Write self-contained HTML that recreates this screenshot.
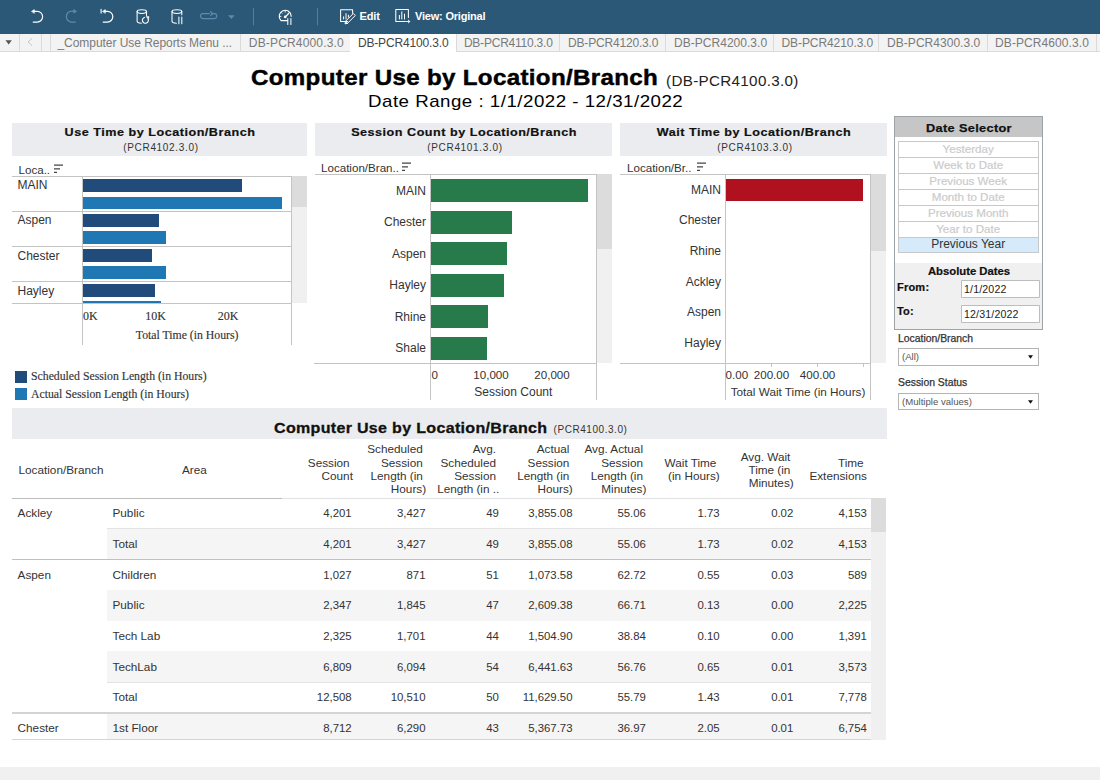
<!DOCTYPE html>
<html><head><meta charset="utf-8">
<style>
*{margin:0;padding:0;box-sizing:border-box}
html,body{width:1100px;height:780px;overflow:hidden;background:#fff;font-family:"Liberation Sans",sans-serif;color:#333;position:relative}
.a{position:absolute;white-space:nowrap}
.r{position:absolute}
</style></head><body>
<div class="r" style="left:0px;top:0px;width:1100px;height:34px;background:#2b5876;"></div>
<svg class="r" style="left:0;top:0" width="520" height="34" viewBox="0 0 520 34" fill="none" stroke-linecap="round" stroke-linejoin="round">
 <path d="M34 11.3 H37.2 A5.4 5.4 0 0 1 37.2 22.1 H33.2" stroke="#ffffff" stroke-width="1.2"/>
 <path d="M31.7 11.3 L34.3 9.6 L34.3 13 Z" fill="#ffffff" stroke="#ffffff" stroke-width="0.6"/>
 <path d="M74.5 11.2 H71.8 A5.45 5.45 0 0 0 71.8 22.1 H75.3" stroke="#5a8bb0" stroke-width="1.2"/>
 <path d="M76.3 11.2 L73.8 9.6 L73.8 12.8 Z" fill="#5a8bb0" stroke="#5a8bb0" stroke-width="0.8"/>
 <path d="M101.1 9.4 V13.1" stroke="#ffffff" stroke-width="1.1"/>
 <path d="M105 11.3 H107.4 A5.4 5.4 0 0 1 107.4 22.1 H103.2" stroke="#ffffff" stroke-width="1.2"/>
 <path d="M102.7 11.3 L105.3 9.6 L105.3 13 Z" fill="#ffffff" stroke="#ffffff" stroke-width="0.6"/>
 <ellipse cx="141.8" cy="11.6" rx="4.7" ry="1.9" stroke="#ffffff" stroke-width="1.05"/>
 <path d="M137.1 11.6 V21.3 A4.7 1.9 0 0 0 141.3 23.2" stroke="#ffffff" stroke-width="1.05"/>
 <path d="M146.5 11.6 V15.6" stroke="#ffffff" stroke-width="1.05"/>
 <path d="M148.2 19.2 A3 3 0 1 1 144.4 17.4" stroke="#ffffff" stroke-width="1.1"/>
 <path d="M146.4 16.6 L149 16.6 L148.6 19.4 Z" fill="#ffffff" stroke="#ffffff" stroke-width="0.5"/>
 <ellipse cx="176.9" cy="11.6" rx="4.9" ry="1.9" stroke="#ffffff" stroke-width="1.05"/>
 <path d="M172 11.6 V21.3 A4.9 1.9 0 0 0 176.4 23.2" stroke="#ffffff" stroke-width="1.05"/>
 <path d="M181.8 11.6 V14.8" stroke="#ffffff" stroke-width="1.05"/>
 <path d="M178.9 17 V23.8 M181.8 17 V23.8" stroke="#ffffff" stroke-width="1.05"/>
 <path d="M211.3 13.6 H214.3 A2.5 2.5 0 0 1 214.3 18.6 H203 A2.5 2.5 0 0 1 203 13.6 H209.5" stroke="#5a8bb0" stroke-width="1.1"/>
 <path d="M210.6 11.5 L212.8 13.6 L210.6 15.7" stroke="#5a8bb0" stroke-width="1.1"/>
 <path d="M228 15.3 H234.6 L231.3 19 Z" fill="#5a8bb0"/>
 <path d="M253.5 8.2 V25" stroke="#4d7fa3" stroke-width="1"/>
 <path d="M317.5 8.2 V25" stroke="#4d7fa3" stroke-width="1"/>
 <path d="M287.2 20.6 H281 A6 6 0 1 1 291.2 16.3" stroke="#ffffff" stroke-width="1.15"/>
 <path d="M285.4 16.8 L288.6 13.6" stroke="#ffffff" stroke-width="1.3"/>
 <circle cx="285.2" cy="16.9" r="1.3" fill="#ffffff"/>
 <path d="M285.2 10.8 V12.2 M279.6 16.4 H281 M281.2 12.4 L282.1 13.3 M289.2 12.4 L288.4 13.2" stroke="#ffffff" stroke-width="0.9"/>
 <path d="M287.8 18.6 V24.4 M290.9 18.6 V24.4" stroke="#ffffff" stroke-width="1.05"/>
 <path d="M347.5 21.5 H340.6 V9.8 H352.6 V13.2" stroke="#ffffff" stroke-width="1.05"/>
 <path d="M343.6 16.8 V19 M346 13.6 V19 M348.4 15.2 V17.2" stroke="#ffffff" stroke-width="1"/>
 <path d="M347.6 23.2 L355.3 15.5 L353.3 13.5 L345.6 21.2 Z" stroke="#ffffff" stroke-width="1"/>
 <path d="M345.6 21.2 L345 23.9 L347.6 23.2" stroke="#ffffff" stroke-width="1"/>
 <path d="M405.4 21.4 H395.8 V9.5 H408.4 V17.4" stroke="#ffffff" stroke-width="1.05"/>
 <path d="M399.4 15.4 V19 M401.8 11.8 V19 M404.5 14.2 V19" stroke="#ffffff" stroke-width="1"/>
 <path d="M406.4 21.5 H409.8 M408.3 20.1 L409.8 21.5 L408.3 22.9" stroke="#ffffff" stroke-width="0.9"/>
</svg>
<div class="a" style="top:6.30px;font-size:11px;line-height:20px;color:#fff;font-weight:bold;font-family:'Liberation Sans',sans-serif;letter-spacing:-0.1px;left:359.40px;">Edit</div>
<div class="a" style="top:6.30px;font-size:11px;line-height:20px;color:#fff;font-weight:bold;font-family:'Liberation Sans',sans-serif;letter-spacing:-0.2px;left:415.00px;">View: Original</div>
<div class="r" style="left:0px;top:34px;width:1100px;height:18px;background:#f3f3f3;"></div>
<div class="r" style="left:0px;top:51px;width:1100px;height:1px;background:#dadada;"></div>
<div class="r" style="left:19px;top:34px;width:1px;height:18px;background:#dadada;"></div>
<div class="r" style="left:41px;top:34px;width:1px;height:18px;background:#dadada;"></div>
<div class="r" style="left:50px;top:34px;width:1px;height:18px;background:#dadada;"></div>
<div class="r" style="left:240px;top:34px;width:1px;height:18px;background:#dadada;"></div>
<div class="r" style="left:350px;top:34px;width:1px;height:18px;background:#dadada;"></div>
<div class="r" style="left:456px;top:34px;width:1px;height:18px;background:#dadada;"></div>
<div class="r" style="left:559px;top:34px;width:1px;height:18px;background:#dadada;"></div>
<div class="r" style="left:665px;top:34px;width:1px;height:18px;background:#dadada;"></div>
<div class="r" style="left:773px;top:34px;width:1px;height:18px;background:#dadada;"></div>
<div class="r" style="left:878px;top:34px;width:1px;height:18px;background:#dadada;"></div>
<div class="r" style="left:987px;top:34px;width:1px;height:18px;background:#dadada;"></div>
<div class="r" style="left:1096px;top:34px;width:1px;height:18px;background:#dadada;"></div>
<div class="r" style="left:350px;top:34px;width:106px;height:18px;background:#ffffff;"></div>
<svg class="r" style="left:0;top:34px" width="60" height="18"><path d="M5.5 6.2 H11.8 L8.65 10.4 Z" fill="#555"/><path d="M32 4.4 L28 8 L32 11.6" stroke="#c4c4c4" stroke-width="1" fill="none"/></svg>
<div class="a" style="top:33.00px;font-size:12px;line-height:20px;color:#7a7a7a;font-weight:normal;font-family:'Liberation Sans',sans-serif;letter-spacing:-0.05px;left:57.50px;">_Computer Use Reports Menu ...</div>
<div class="a" style="top:33.00px;font-size:12px;line-height:20px;color:#7a7a7a;font-weight:normal;font-family:'Liberation Sans',sans-serif;letter-spacing:0.17px;left:248.80px;">DB-PCR4000.3.0</div>
<div class="a" style="top:33.00px;font-size:12px;line-height:20px;color:#444;font-weight:normal;font-family:'Liberation Sans',sans-serif;letter-spacing:-0.15px;left:357.90px;">DB-PCR4100.3.0</div>
<div class="a" style="top:33.00px;font-size:12px;line-height:20px;color:#7a7a7a;font-weight:normal;font-family:'Liberation Sans',sans-serif;letter-spacing:-0.22px;left:463.90px;">DB-PCR4110.3.0</div>
<div class="a" style="top:33.00px;font-size:12px;line-height:20px;color:#7a7a7a;font-weight:normal;font-family:'Liberation Sans',sans-serif;letter-spacing:-0.18px;left:568.00px;">DB-PCR4120.3.0</div>
<div class="a" style="top:33.00px;font-size:12px;line-height:20px;color:#7a7a7a;font-weight:normal;font-family:'Liberation Sans',sans-serif;letter-spacing:0.02px;left:674.10px;">DB-PCR4200.3.0</div>
<div class="a" style="top:33.00px;font-size:12px;line-height:20px;color:#7a7a7a;font-weight:normal;font-family:'Liberation Sans',sans-serif;letter-spacing:-0.08px;left:781.50px;">DB-PCR4210.3.0</div>
<div class="a" style="top:33.00px;font-size:12px;line-height:20px;color:#7a7a7a;font-weight:normal;font-family:'Liberation Sans',sans-serif;letter-spacing:0.03px;left:887.10px;">DB-PCR4300.3.0</div>
<div class="a" style="top:33.00px;font-size:12px;line-height:20px;color:#7a7a7a;font-weight:normal;font-family:'Liberation Sans',sans-serif;letter-spacing:0.08px;left:995.10px;">DB-PCR4600.3.0</div>
<div class="a" style="top:68.40px;font-size:22px;line-height:20px;color:#000;font-weight:bold;font-family:'Liberation Sans',sans-serif;letter-spacing:0.3px;left:251.00px;transform:scaleX(1.097);transform-origin:left top;-webkit-text-stroke:0.45px #000;">Computer Use by Location/Branch</div>
<div class="a" style="top:70.60px;font-size:14px;line-height:20px;color:#222;font-weight:normal;font-family:'Liberation Sans',sans-serif;letter-spacing:0.3px;left:665.60px;transform:scaleX(1.085);transform-origin:left top;">(DB-PCR4100.3.0)</div>
<div class="a" style="top:92.40px;font-size:17px;line-height:20px;color:#000;font-weight:normal;font-family:'Liberation Sans',sans-serif;letter-spacing:0.45px;left:368.00px;transform:scaleX(1.1);transform-origin:left top;">Date Range : 1/1/2022 - 12/31/2022</div>
<div class="r" style="left:12px;top:123px;width:295px;height:33px;background:#ebecef;"></div>
<div class="a" style="top:121.70px;font-size:11px;line-height:20px;color:#111;font-weight:bold;font-family:'Liberation Sans',sans-serif;letter-spacing:0.45px;left:-339.80px;width:1000px;text-align:center;transform:scaleX(1.145);transform-origin:center top;-webkit-text-stroke:0.2px #111;">Use Time by Location/Branch</div>
<div class="a" style="top:137.50px;font-size:10px;line-height:20px;color:#333;font-weight:normal;font-family:'Liberation Sans',sans-serif;letter-spacing:0.68px;left:-339.00px;width:1000px;text-align:center;">(PCR4102.3.0)</div>
<div class="a" style="top:159.50px;font-size:11.6px;line-height:20px;color:#333;font-weight:normal;font-family:'Liberation Sans',sans-serif;left:18.50px;">Loca..</div>
<svg class="r" style="left:54.3px;top:163.8px" width="10" height="10"><path d="M0 1.2 H9 M0 4.8 H6 M0 8.4 H3" stroke="#444" stroke-width="1.2"/></svg>
<div class="r" style="left:292px;top:176px;width:15px;height:127px;background:#f0f0f0;"></div>
<div class="r" style="left:292px;top:176px;width:15px;height:31px;background:#dcdcdc;"></div>
<div class="r" style="left:12px;top:176px;width:279px;height:1px;background:#c4c4c4;"></div>
<div class="r" style="left:12px;top:211px;width:279px;height:1px;background:#c4c4c4;"></div>
<div class="r" style="left:12px;top:246px;width:279px;height:1px;background:#c4c4c4;"></div>
<div class="r" style="left:12px;top:281px;width:279px;height:1px;background:#c4c4c4;"></div>
<div class="r" style="left:12px;top:303px;width:279px;height:1px;background:#c4c4c4;"></div>
<div class="r" style="left:82px;top:176px;width:1px;height:169px;background:#c4c4c4;"></div>
<div class="r" style="left:291px;top:176px;width:1px;height:169px;background:#c4c4c4;"></div>
<div class="r" style="left:83px;top:179px;width:159.0px;height:12.5px;background:#214b7b"></div>
<div class="r" style="left:83px;top:196.5px;width:198.5px;height:12.5px;background:#1f77b4"></div>
<div class="r" style="left:83px;top:214px;width:75.6px;height:12.5px;background:#214b7b"></div>
<div class="r" style="left:83px;top:231px;width:83.4px;height:13px;background:#1f77b4"></div>
<div class="r" style="left:83px;top:249px;width:69.0px;height:12.5px;background:#214b7b"></div>
<div class="r" style="left:83px;top:266px;width:83.4px;height:13px;background:#1f77b4"></div>
<div class="r" style="left:83px;top:284px;width:72.0px;height:12.5px;background:#214b7b"></div>
<div class="r" style="left:83px;top:301px;width:77.8px;height:2px;background:#1f77b4"></div>
<div class="a" style="top:175.10px;font-size:12px;line-height:20px;color:#333;font-weight:normal;font-family:'Liberation Sans',sans-serif;left:17.50px;">MAIN</div>
<div class="a" style="top:210.30px;font-size:12px;line-height:20px;color:#333;font-weight:normal;font-family:'Liberation Sans',sans-serif;left:17.50px;">Aspen</div>
<div class="a" style="top:245.60px;font-size:12px;line-height:20px;color:#333;font-weight:normal;font-family:'Liberation Sans',sans-serif;left:17.50px;">Chester</div>
<div class="a" style="top:280.60px;font-size:12px;line-height:20px;color:#333;font-weight:normal;font-family:'Liberation Sans',sans-serif;left:17.50px;">Hayley</div>
<div class="a" style="top:306.20px;font-size:12px;line-height:20px;color:#333;font-weight:normal;font-family:'Liberation Serif',serif;left:83.00px;-webkit-text-stroke:0.15px #333;">0K</div>
<div class="a" style="top:306.20px;font-size:12px;line-height:20px;color:#333;font-weight:normal;font-family:'Liberation Serif',serif;left:-344.50px;width:1000px;text-align:center;-webkit-text-stroke:0.15px #333;">10K</div>
<div class="a" style="top:306.20px;font-size:12px;line-height:20px;color:#333;font-weight:normal;font-family:'Liberation Serif',serif;left:-272.00px;width:1000px;text-align:center;-webkit-text-stroke:0.15px #333;">20K</div>
<div class="a" style="top:326.10px;font-size:11.75px;line-height:20px;color:#333;font-weight:normal;font-family:'Liberation Serif',serif;left:-312.90px;width:1000px;text-align:center;-webkit-text-stroke:0.15px #333;">Total Time (in Hours)</div>
<div class="r" style="left:15px;top:371px;width:12px;height:12px;background:#214b7b;"></div>
<div class="r" style="left:15px;top:388px;width:12px;height:12px;background:#1f77b4;"></div>
<div class="a" style="top:367.40px;font-size:11.75px;line-height:20px;color:#333;font-weight:normal;font-family:'Liberation Serif',serif;left:31.00px;-webkit-text-stroke:0.15px #333;">Scheduled Session Length (in Hours)</div>
<div class="a" style="top:385.00px;font-size:11.75px;line-height:20px;color:#333;font-weight:normal;font-family:'Liberation Serif',serif;left:31.00px;-webkit-text-stroke:0.15px #333;">Actual Session Length (in Hours)</div>
<div class="r" style="left:315px;top:123px;width:297px;height:33px;background:#ebecef;"></div>
<div class="a" style="top:121.70px;font-size:11px;line-height:20px;color:#111;font-weight:bold;font-family:'Liberation Sans',sans-serif;letter-spacing:0.45px;left:-35.80px;width:1000px;text-align:center;transform:scaleX(1.145);transform-origin:center top;-webkit-text-stroke:0.2px #111;">Session Count by Location/Branch</div>
<div class="a" style="top:137.50px;font-size:10px;line-height:20px;color:#333;font-weight:normal;font-family:'Liberation Sans',sans-serif;letter-spacing:0.68px;left:-35.00px;width:1000px;text-align:center;">(PCR4101.3.0)</div>
<div class="a" style="top:157.70px;font-size:11.6px;line-height:20px;color:#333;font-weight:normal;font-family:'Liberation Sans',sans-serif;left:321.00px;">Location/Bran..</div>
<svg class="r" style="left:402px;top:162px" width="10" height="10"><path d="M0 1.2 H9 M0 4.8 H6 M0 8.4 H3" stroke="#444" stroke-width="1.2"/></svg>
<div class="r" style="left:597px;top:174px;width:15px;height:189px;background:#f0f0f0;"></div>
<div class="r" style="left:597px;top:174px;width:15px;height:75px;background:#dcdcdc;"></div>
<div class="r" style="left:315px;top:174px;width:282px;height:1px;background:#c4c4c4;"></div>
<div class="r" style="left:314px;top:363px;width:283px;height:1px;background:#c4c4c4;"></div>
<div class="r" style="left:430px;top:174px;width:1px;height:226px;background:#c4c4c4;"></div>
<div class="r" style="left:596px;top:174px;width:1px;height:226px;background:#c4c4c4;"></div>
<div class="r" style="left:431px;top:179px;width:157.0px;height:23px;background:#277b4b"></div>
<div class="r" style="left:431px;top:210.6px;width:80.8px;height:23.0px;background:#277b4b"></div>
<div class="r" style="left:431px;top:242.1px;width:75.6px;height:23.00000000000003px;background:#277b4b"></div>
<div class="r" style="left:431px;top:273.6px;width:72.7px;height:23.0px;background:#277b4b"></div>
<div class="r" style="left:431px;top:305.1px;width:56.5px;height:23.0px;background:#277b4b"></div>
<div class="r" style="left:431px;top:336.6px;width:55.6px;height:23.0px;background:#277b4b"></div>
<div class="a" style="top:180.70px;font-size:12px;line-height:20px;color:#333;font-weight:normal;font-family:'Liberation Sans',sans-serif;left:-174.00px;width:600px;text-align:right;">MAIN</div>
<div class="a" style="top:212.20px;font-size:12px;line-height:20px;color:#333;font-weight:normal;font-family:'Liberation Sans',sans-serif;left:-174.00px;width:600px;text-align:right;">Chester</div>
<div class="a" style="top:243.60px;font-size:12px;line-height:20px;color:#333;font-weight:normal;font-family:'Liberation Sans',sans-serif;left:-174.00px;width:600px;text-align:right;">Aspen</div>
<div class="a" style="top:275.10px;font-size:12px;line-height:20px;color:#333;font-weight:normal;font-family:'Liberation Sans',sans-serif;left:-174.00px;width:600px;text-align:right;">Hayley</div>
<div class="a" style="top:306.50px;font-size:12px;line-height:20px;color:#333;font-weight:normal;font-family:'Liberation Sans',sans-serif;left:-174.00px;width:600px;text-align:right;">Rhine</div>
<div class="a" style="top:338.00px;font-size:12px;line-height:20px;color:#333;font-weight:normal;font-family:'Liberation Sans',sans-serif;left:-174.00px;width:600px;text-align:right;">Shale</div>
<div class="a" style="top:365.30px;font-size:11.6px;line-height:20px;color:#333;font-weight:normal;font-family:'Liberation Sans',sans-serif;left:431.60px;">0</div>
<div class="a" style="top:365.30px;font-size:11.6px;line-height:20px;color:#333;font-weight:normal;font-family:'Liberation Sans',sans-serif;left:-9.00px;width:1000px;text-align:center;">10,000</div>
<div class="a" style="top:365.30px;font-size:11.6px;line-height:20px;color:#333;font-weight:normal;font-family:'Liberation Sans',sans-serif;left:52.00px;width:1000px;text-align:center;">20,000</div>
<div class="a" style="top:382.00px;font-size:12px;line-height:20px;color:#333;font-weight:normal;font-family:'Liberation Sans',sans-serif;left:13.30px;width:1000px;text-align:center;">Session Count</div>
<div class="r" style="left:620px;top:123px;width:267px;height:33px;background:#ebecef;"></div>
<div class="a" style="top:121.70px;font-size:11px;line-height:20px;color:#111;font-weight:bold;font-family:'Liberation Sans',sans-serif;letter-spacing:0.45px;left:254.20px;width:1000px;text-align:center;transform:scaleX(1.145);transform-origin:center top;-webkit-text-stroke:0.2px #111;">Wait Time by Location/Branch</div>
<div class="a" style="top:137.50px;font-size:10px;line-height:20px;color:#333;font-weight:normal;font-family:'Liberation Sans',sans-serif;letter-spacing:0.68px;left:255.00px;width:1000px;text-align:center;">(PCR4103.3.0)</div>
<div class="a" style="top:157.70px;font-size:11.6px;line-height:20px;color:#333;font-weight:normal;font-family:'Liberation Sans',sans-serif;left:627.00px;">Location/Br..</div>
<svg class="r" style="left:696.5px;top:162px" width="10" height="10"><path d="M0 1.2 H9 M0 4.8 H6 M0 8.4 H3" stroke="#444" stroke-width="1.2"/></svg>
<div class="r" style="left:871px;top:174px;width:15px;height:189px;background:#f0f0f0;"></div>
<div class="r" style="left:871px;top:174px;width:15px;height:77px;background:#dcdcdc;"></div>
<div class="r" style="left:620px;top:174px;width:251px;height:1px;background:#c4c4c4;"></div>
<div class="r" style="left:620px;top:363px;width:251px;height:1px;background:#c4c4c4;"></div>
<div class="r" style="left:725px;top:174px;width:1px;height:226px;background:#c4c4c4;"></div>
<div class="r" style="left:870px;top:174px;width:1px;height:226px;background:#c4c4c4;"></div>
<div class="r" style="left:771px;top:363px;width:1px;height:4px;background:#c4c4c4;"></div>
<div class="r" style="left:817px;top:363px;width:1px;height:4px;background:#c4c4c4;"></div>
<div class="r" style="left:863px;top:363px;width:1px;height:4px;background:#c4c4c4;"></div>
<div class="r" style="left:726px;top:178.7px;width:137.3px;height:22.8px;background:#b0111e"></div>
<div class="a" style="top:180.00px;font-size:12px;line-height:20px;color:#333;font-weight:normal;font-family:'Liberation Sans',sans-serif;left:121.00px;width:600px;text-align:right;">MAIN</div>
<div class="a" style="top:210.00px;font-size:12px;line-height:20px;color:#333;font-weight:normal;font-family:'Liberation Sans',sans-serif;left:121.00px;width:600px;text-align:right;">Chester</div>
<div class="a" style="top:241.00px;font-size:12px;line-height:20px;color:#333;font-weight:normal;font-family:'Liberation Sans',sans-serif;left:121.00px;width:600px;text-align:right;">Rhine</div>
<div class="a" style="top:271.60px;font-size:12px;line-height:20px;color:#333;font-weight:normal;font-family:'Liberation Sans',sans-serif;left:121.00px;width:600px;text-align:right;">Ackley</div>
<div class="a" style="top:302.20px;font-size:12px;line-height:20px;color:#333;font-weight:normal;font-family:'Liberation Sans',sans-serif;left:121.00px;width:600px;text-align:right;">Aspen</div>
<div class="a" style="top:333.00px;font-size:12px;line-height:20px;color:#333;font-weight:normal;font-family:'Liberation Sans',sans-serif;left:121.00px;width:600px;text-align:right;">Hayley</div>
<div class="a" style="top:365.30px;font-size:11.6px;line-height:20px;color:#333;font-weight:normal;font-family:'Liberation Sans',sans-serif;left:725.60px;">0.00</div>
<div class="a" style="top:365.30px;font-size:11.6px;line-height:20px;color:#333;font-weight:normal;font-family:'Liberation Sans',sans-serif;left:271.50px;width:1000px;text-align:center;">200.00</div>
<div class="a" style="top:365.30px;font-size:11.6px;line-height:20px;color:#333;font-weight:normal;font-family:'Liberation Sans',sans-serif;left:317.60px;width:1000px;text-align:center;">400.00</div>
<div class="a" style="top:381.90px;font-size:11.75px;line-height:20px;color:#333;font-weight:normal;font-family:'Liberation Sans',sans-serif;left:298.00px;width:1000px;text-align:center;">Total Wait Time (in Hours)</div>
<div class="r" style="left:894px;top:116px;width:149px;height:214px;background:#9ea3a8;"></div>
<div class="r" style="left:895px;top:117px;width:147px;height:212px;background:#ffffff;"></div>
<div class="r" style="left:895px;top:117px;width:147px;height:20px;background:#c6c6c6;"></div>
<div class="a" style="top:117.60px;font-size:11.6px;line-height:20px;color:#111;font-weight:bold;font-family:'Liberation Sans',sans-serif;letter-spacing:0.3px;left:468.60px;width:1000px;text-align:center;transform:scaleX(1.1);transform-origin:center top;-webkit-text-stroke:0.25px #111;">Date Selector</div>
<div class="r" style="left:898px;top:141px;width:141px;height:112px;background:#c8c8c8;"></div>
<div class="r" style="left:899px;top:142px;width:139px;height:15px;background:#ffffff;"></div>
<div class="a" style="top:139.40px;font-size:11.6px;line-height:20px;color:#cbcbcb;font-weight:normal;font-family:'Liberation Sans',sans-serif;left:468.20px;width:1000px;text-align:center;-webkit-text-stroke:0.2px #cbcbcb;">Yesterday</div>
<div class="r" style="left:899px;top:158px;width:139px;height:15px;background:#ffffff;"></div>
<div class="a" style="top:155.40px;font-size:11.6px;line-height:20px;color:#cbcbcb;font-weight:normal;font-family:'Liberation Sans',sans-serif;left:468.20px;width:1000px;text-align:center;-webkit-text-stroke:0.2px #cbcbcb;">Week to Date</div>
<div class="r" style="left:899px;top:174px;width:139px;height:15px;background:#ffffff;"></div>
<div class="a" style="top:171.40px;font-size:11.6px;line-height:20px;color:#cbcbcb;font-weight:normal;font-family:'Liberation Sans',sans-serif;left:468.20px;width:1000px;text-align:center;-webkit-text-stroke:0.2px #cbcbcb;">Previous Week</div>
<div class="r" style="left:899px;top:190px;width:139px;height:15px;background:#ffffff;"></div>
<div class="a" style="top:187.40px;font-size:11.6px;line-height:20px;color:#cbcbcb;font-weight:normal;font-family:'Liberation Sans',sans-serif;left:468.20px;width:1000px;text-align:center;-webkit-text-stroke:0.2px #cbcbcb;">Month to Date</div>
<div class="r" style="left:899px;top:206px;width:139px;height:15px;background:#ffffff;"></div>
<div class="a" style="top:203.40px;font-size:11.6px;line-height:20px;color:#cbcbcb;font-weight:normal;font-family:'Liberation Sans',sans-serif;left:468.20px;width:1000px;text-align:center;-webkit-text-stroke:0.2px #cbcbcb;">Previous Month</div>
<div class="r" style="left:899px;top:222px;width:139px;height:15px;background:#ffffff;"></div>
<div class="a" style="top:219.40px;font-size:11.6px;line-height:20px;color:#cbcbcb;font-weight:normal;font-family:'Liberation Sans',sans-serif;left:468.20px;width:1000px;text-align:center;-webkit-text-stroke:0.2px #cbcbcb;">Year to Date</div>
<div class="r" style="left:899px;top:238px;width:139px;height:14px;background:#d5ebfb;"></div>
<div class="a" style="top:234.20px;font-size:12px;line-height:20px;color:#333;font-weight:normal;font-family:'Liberation Sans',sans-serif;left:468.20px;width:1000px;text-align:center;">Previous Year</div>
<div class="r" style="left:895px;top:263px;width:147px;height:66px;background:#f0f0f0;"></div>
<div class="a" style="top:261.00px;font-size:10.6px;line-height:20px;color:#111;font-weight:bold;font-family:'Liberation Sans',sans-serif;left:468.60px;width:1000px;text-align:center;transform:scaleX(1.065);transform-origin:center top;-webkit-text-stroke:0.2px #111;">Absolute Dates</div>
<div class="a" style="top:277.00px;font-size:10.6px;line-height:20px;color:#111;font-weight:bold;font-family:'Liberation Sans',sans-serif;letter-spacing:0.2px;left:897.00px;transform:scaleX(1.04);transform-origin:left top;-webkit-text-stroke:0.2px #111;">From:</div>
<div class="a" style="top:301.20px;font-size:10.6px;line-height:20px;color:#111;font-weight:bold;font-family:'Liberation Sans',sans-serif;letter-spacing:0.2px;left:897.00px;transform:scaleX(1.04);transform-origin:left top;-webkit-text-stroke:0.2px #111;">To:</div>
<div class="r" style="left:961px;top:280px;width:79px;height:18px;background:#bdbdbd;border-radius:1px"></div>
<div class="r" style="left:962px;top:281px;width:77px;height:16px;background:#ffffff;"></div>
<div class="a" style="top:279.70px;font-size:10.0px;line-height:20px;color:#222;font-weight:normal;font-family:'Liberation Sans',sans-serif;letter-spacing:0.15px;left:963.80px;transform:scaleX(1.06);transform-origin:left top;">1/1/2022</div>
<div class="r" style="left:961px;top:305px;width:79px;height:18px;background:#bdbdbd;border-radius:1px"></div>
<div class="r" style="left:962px;top:306px;width:77px;height:16px;background:#ffffff;"></div>
<div class="a" style="top:304.70px;font-size:10.0px;line-height:20px;color:#222;font-weight:normal;font-family:'Liberation Sans',sans-serif;letter-spacing:0.15px;left:963.80px;transform:scaleX(1.06);transform-origin:left top;">12/31/2022</div>
<div class="a" style="top:328.50px;font-size:10.4px;line-height:20px;color:#333;font-weight:normal;font-family:'Liberation Sans',sans-serif;left:898.00px;-webkit-text-stroke:0.25px #333;">Location/Branch</div>
<div class="a" style="top:373.20px;font-size:10.4px;line-height:20px;color:#333;font-weight:normal;font-family:'Liberation Sans',sans-serif;left:898.00px;-webkit-text-stroke:0.25px #333;">Session Status</div>
<div class="r" style="left:898px;top:348px;width:141px;height:18px;background:#b4b4b4;"></div>
<div class="r" style="left:899px;top:349px;width:139px;height:16px;background:#ffffff;"></div>
<div class="a" style="top:347.40px;font-size:9.6px;line-height:20px;color:#555;font-weight:normal;font-family:'Liberation Sans',sans-serif;left:902.00px;">(All)</div>
<svg class="r" style="left:1027.5px;top:354.5px" width="8" height="6"><path d="M0 0.3 H5 L2.5 3.8 Z" fill="#111"/></svg>
<div class="r" style="left:898px;top:393px;width:141px;height:17px;background:#b4b4b4;"></div>
<div class="r" style="left:899px;top:394px;width:139px;height:15px;background:#ffffff;"></div>
<div class="a" style="top:392.40px;font-size:9.6px;line-height:20px;color:#555;font-weight:normal;font-family:'Liberation Sans',sans-serif;left:902.00px;">(Multiple values)</div>
<svg class="r" style="left:1027.5px;top:399.5px" width="8" height="6"><path d="M0 0.3 H5 L2.5 3.8 Z" fill="#111"/></svg>
<div class="r" style="left:12px;top:408px;width:875px;height:31px;background:#ebecef;"></div>
<div class="a" style="top:417.60px;font-size:15px;line-height:20px;color:#111;font-weight:bold;font-family:'Liberation Sans',sans-serif;letter-spacing:0.3px;left:274.00px;transform:scaleX(1.068);transform-origin:left top;-webkit-text-stroke:0.3px #111;">Computer Use by Location/Branch</div>
<div class="a" style="top:419.60px;font-size:10px;line-height:20px;color:#333;font-weight:normal;font-family:'Liberation Sans',sans-serif;letter-spacing:0.55px;left:553.60px;">(PCR4100.3.0)</div>
<div class="a" style="top:459.60px;font-size:11.75px;line-height:20px;color:#333;font-weight:normal;font-family:'Liberation Sans',sans-serif;left:18.50px;">Location/Branch</div>
<div class="a" style="top:459.60px;font-size:11.75px;line-height:20px;color:#333;font-weight:normal;font-family:'Liberation Sans',sans-serif;left:182.00px;">Area</div>
<div class="a" style="top:452.70px;font-size:11.75px;line-height:20px;color:#333;font-weight:normal;font-family:'Liberation Sans',sans-serif;left:-250.40px;width:600px;text-align:right;">Session</div>
<div class="a" style="top:466.00px;font-size:11.75px;line-height:20px;color:#333;font-weight:normal;font-family:'Liberation Sans',sans-serif;left:-247.10px;width:600px;text-align:right;">Count</div>
<div class="a" style="top:439.40px;font-size:11.75px;line-height:20px;color:#333;font-weight:normal;font-family:'Liberation Sans',sans-serif;left:-177.20px;width:600px;text-align:right;">Scheduled</div>
<div class="a" style="top:452.70px;font-size:11.75px;line-height:20px;color:#333;font-weight:normal;font-family:'Liberation Sans',sans-serif;left:-177.20px;width:600px;text-align:right;">Session</div>
<div class="a" style="top:466.00px;font-size:11.75px;line-height:20px;color:#333;font-weight:normal;font-family:'Liberation Sans',sans-serif;left:-177.20px;width:600px;text-align:right;">Length (in</div>
<div class="a" style="top:478.80px;font-size:11.75px;line-height:20px;color:#333;font-weight:normal;font-family:'Liberation Sans',sans-serif;left:-173.90px;width:600px;text-align:right;">Hours)</div>
<div class="a" style="top:439.40px;font-size:11.75px;line-height:20px;color:#333;font-weight:normal;font-family:'Liberation Sans',sans-serif;left:-104.00px;width:600px;text-align:right;">Avg.</div>
<div class="a" style="top:452.70px;font-size:11.75px;line-height:20px;color:#333;font-weight:normal;font-family:'Liberation Sans',sans-serif;left:-104.00px;width:600px;text-align:right;">Scheduled</div>
<div class="a" style="top:466.00px;font-size:11.75px;line-height:20px;color:#333;font-weight:normal;font-family:'Liberation Sans',sans-serif;left:-104.00px;width:600px;text-align:right;">Session</div>
<div class="a" style="top:478.80px;font-size:11.75px;line-height:20px;color:#333;font-weight:normal;font-family:'Liberation Sans',sans-serif;left:-100.70px;width:600px;text-align:right;">Length (in ..</div>
<div class="a" style="top:439.40px;font-size:11.75px;line-height:20px;color:#333;font-weight:normal;font-family:'Liberation Sans',sans-serif;left:-30.60px;width:600px;text-align:right;">Actual</div>
<div class="a" style="top:452.70px;font-size:11.75px;line-height:20px;color:#333;font-weight:normal;font-family:'Liberation Sans',sans-serif;left:-30.60px;width:600px;text-align:right;">Session</div>
<div class="a" style="top:466.00px;font-size:11.75px;line-height:20px;color:#333;font-weight:normal;font-family:'Liberation Sans',sans-serif;left:-30.60px;width:600px;text-align:right;">Length (in</div>
<div class="a" style="top:478.80px;font-size:11.75px;line-height:20px;color:#333;font-weight:normal;font-family:'Liberation Sans',sans-serif;left:-27.30px;width:600px;text-align:right;">Hours)</div>
<div class="a" style="top:439.40px;font-size:11.75px;line-height:20px;color:#333;font-weight:normal;font-family:'Liberation Sans',sans-serif;left:43.00px;width:600px;text-align:right;">Avg. Actual</div>
<div class="a" style="top:452.70px;font-size:11.75px;line-height:20px;color:#333;font-weight:normal;font-family:'Liberation Sans',sans-serif;left:43.00px;width:600px;text-align:right;">Session</div>
<div class="a" style="top:466.00px;font-size:11.75px;line-height:20px;color:#333;font-weight:normal;font-family:'Liberation Sans',sans-serif;left:43.00px;width:600px;text-align:right;">Length (in</div>
<div class="a" style="top:478.80px;font-size:11.75px;line-height:20px;color:#333;font-weight:normal;font-family:'Liberation Sans',sans-serif;left:46.30px;width:600px;text-align:right;">Minutes)</div>
<div class="a" style="top:452.70px;font-size:11.75px;line-height:20px;color:#333;font-weight:normal;font-family:'Liberation Sans',sans-serif;left:116.40px;width:600px;text-align:right;">Wait Time</div>
<div class="a" style="top:466.00px;font-size:11.75px;line-height:20px;color:#333;font-weight:normal;font-family:'Liberation Sans',sans-serif;left:119.70px;width:600px;text-align:right;">(in Hours)</div>
<div class="a" style="top:446.60px;font-size:11.75px;line-height:20px;color:#333;font-weight:normal;font-family:'Liberation Sans',sans-serif;left:190.40px;width:600px;text-align:right;">Avg. Wait</div>
<div class="a" style="top:459.70px;font-size:11.75px;line-height:20px;color:#333;font-weight:normal;font-family:'Liberation Sans',sans-serif;left:190.40px;width:600px;text-align:right;">Time (in</div>
<div class="a" style="top:472.80px;font-size:11.75px;line-height:20px;color:#333;font-weight:normal;font-family:'Liberation Sans',sans-serif;left:193.70px;width:600px;text-align:right;">Minutes)</div>
<div class="a" style="top:452.70px;font-size:11.75px;line-height:20px;color:#333;font-weight:normal;font-family:'Liberation Sans',sans-serif;left:263.60px;width:600px;text-align:right;">Time</div>
<div class="a" style="top:466.00px;font-size:11.75px;line-height:20px;color:#333;font-weight:normal;font-family:'Liberation Sans',sans-serif;left:266.90px;width:600px;text-align:right;">Extensions</div>
<div class="r" style="left:871px;top:498px;width:15px;height:242px;background:#f0f0f0;"></div>
<div class="r" style="left:871px;top:498px;width:15px;height:34px;background:#dcdcdc;"></div>
<div class="r" style="left:12px;top:498px;width:270px;height:1px;background:#bcbcbc;"></div>
<div class="r" style="left:282px;top:498px;width:589px;height:1px;background:#e2e2e2;"></div>
<div class="a" style="top:503.30px;font-size:11.75px;line-height:20px;color:#333;font-weight:normal;font-family:'Liberation Sans',sans-serif;left:17.60px;">Ackley</div>
<div class="a" style="top:503.30px;font-size:11.75px;line-height:20px;color:#333;font-weight:normal;font-family:'Liberation Sans',sans-serif;left:112.50px;">Public</div>
<div class="a" style="top:503.30px;font-size:11.4px;line-height:20px;color:#333;font-weight:normal;font-family:'Liberation Sans',sans-serif;left:-248.30px;width:600px;text-align:right;">4,201</div>
<div class="a" style="top:503.30px;font-size:11.4px;line-height:20px;color:#333;font-weight:normal;font-family:'Liberation Sans',sans-serif;left:-174.50px;width:600px;text-align:right;">3,427</div>
<div class="a" style="top:503.30px;font-size:11.4px;line-height:20px;color:#333;font-weight:normal;font-family:'Liberation Sans',sans-serif;left:-101.10px;width:600px;text-align:right;">49</div>
<div class="a" style="top:503.30px;font-size:11.4px;line-height:20px;color:#333;font-weight:normal;font-family:'Liberation Sans',sans-serif;left:-27.50px;width:600px;text-align:right;">3,855.08</div>
<div class="a" style="top:503.30px;font-size:11.4px;line-height:20px;color:#333;font-weight:normal;font-family:'Liberation Sans',sans-serif;left:45.90px;width:600px;text-align:right;">55.06</div>
<div class="a" style="top:503.30px;font-size:11.4px;line-height:20px;color:#333;font-weight:normal;font-family:'Liberation Sans',sans-serif;left:119.70px;width:600px;text-align:right;">1.73</div>
<div class="a" style="top:503.30px;font-size:11.4px;line-height:20px;color:#333;font-weight:normal;font-family:'Liberation Sans',sans-serif;left:193.30px;width:600px;text-align:right;">0.02</div>
<div class="a" style="top:503.30px;font-size:11.4px;line-height:20px;color:#333;font-weight:normal;font-family:'Liberation Sans',sans-serif;left:266.90px;width:600px;text-align:right;">4,153</div>
<div class="r" style="left:107px;top:529px;width:764px;height:30px;background:#f5f5f5;"></div>
<div class="a" style="top:533.97px;font-size:11.75px;line-height:20px;color:#333;font-weight:normal;font-family:'Liberation Sans',sans-serif;left:112.50px;">Total</div>
<div class="a" style="top:533.97px;font-size:11.4px;line-height:20px;color:#333;font-weight:normal;font-family:'Liberation Sans',sans-serif;left:-248.30px;width:600px;text-align:right;">4,201</div>
<div class="a" style="top:533.97px;font-size:11.4px;line-height:20px;color:#333;font-weight:normal;font-family:'Liberation Sans',sans-serif;left:-174.50px;width:600px;text-align:right;">3,427</div>
<div class="a" style="top:533.97px;font-size:11.4px;line-height:20px;color:#333;font-weight:normal;font-family:'Liberation Sans',sans-serif;left:-101.10px;width:600px;text-align:right;">49</div>
<div class="a" style="top:533.97px;font-size:11.4px;line-height:20px;color:#333;font-weight:normal;font-family:'Liberation Sans',sans-serif;left:-27.50px;width:600px;text-align:right;">3,855.08</div>
<div class="a" style="top:533.97px;font-size:11.4px;line-height:20px;color:#333;font-weight:normal;font-family:'Liberation Sans',sans-serif;left:45.90px;width:600px;text-align:right;">55.06</div>
<div class="a" style="top:533.97px;font-size:11.4px;line-height:20px;color:#333;font-weight:normal;font-family:'Liberation Sans',sans-serif;left:119.70px;width:600px;text-align:right;">1.73</div>
<div class="a" style="top:533.97px;font-size:11.4px;line-height:20px;color:#333;font-weight:normal;font-family:'Liberation Sans',sans-serif;left:193.30px;width:600px;text-align:right;">0.02</div>
<div class="a" style="top:533.97px;font-size:11.4px;line-height:20px;color:#333;font-weight:normal;font-family:'Liberation Sans',sans-serif;left:266.90px;width:600px;text-align:right;">4,153</div>
<div class="a" style="top:564.63px;font-size:11.75px;line-height:20px;color:#333;font-weight:normal;font-family:'Liberation Sans',sans-serif;left:17.60px;">Aspen</div>
<div class="a" style="top:564.63px;font-size:11.75px;line-height:20px;color:#333;font-weight:normal;font-family:'Liberation Sans',sans-serif;left:112.50px;">Children</div>
<div class="a" style="top:564.63px;font-size:11.4px;line-height:20px;color:#333;font-weight:normal;font-family:'Liberation Sans',sans-serif;left:-248.30px;width:600px;text-align:right;">1,027</div>
<div class="a" style="top:564.63px;font-size:11.4px;line-height:20px;color:#333;font-weight:normal;font-family:'Liberation Sans',sans-serif;left:-174.50px;width:600px;text-align:right;">871</div>
<div class="a" style="top:564.63px;font-size:11.4px;line-height:20px;color:#333;font-weight:normal;font-family:'Liberation Sans',sans-serif;left:-101.10px;width:600px;text-align:right;">51</div>
<div class="a" style="top:564.63px;font-size:11.4px;line-height:20px;color:#333;font-weight:normal;font-family:'Liberation Sans',sans-serif;left:-27.50px;width:600px;text-align:right;">1,073.58</div>
<div class="a" style="top:564.63px;font-size:11.4px;line-height:20px;color:#333;font-weight:normal;font-family:'Liberation Sans',sans-serif;left:45.90px;width:600px;text-align:right;">62.72</div>
<div class="a" style="top:564.63px;font-size:11.4px;line-height:20px;color:#333;font-weight:normal;font-family:'Liberation Sans',sans-serif;left:119.70px;width:600px;text-align:right;">0.55</div>
<div class="a" style="top:564.63px;font-size:11.4px;line-height:20px;color:#333;font-weight:normal;font-family:'Liberation Sans',sans-serif;left:193.30px;width:600px;text-align:right;">0.03</div>
<div class="a" style="top:564.63px;font-size:11.4px;line-height:20px;color:#333;font-weight:normal;font-family:'Liberation Sans',sans-serif;left:266.90px;width:600px;text-align:right;">589</div>
<div class="r" style="left:107px;top:590px;width:764px;height:31px;background:#f5f5f5;"></div>
<div class="a" style="top:595.30px;font-size:11.75px;line-height:20px;color:#333;font-weight:normal;font-family:'Liberation Sans',sans-serif;left:112.50px;">Public</div>
<div class="a" style="top:595.30px;font-size:11.4px;line-height:20px;color:#333;font-weight:normal;font-family:'Liberation Sans',sans-serif;left:-248.30px;width:600px;text-align:right;">2,347</div>
<div class="a" style="top:595.30px;font-size:11.4px;line-height:20px;color:#333;font-weight:normal;font-family:'Liberation Sans',sans-serif;left:-174.50px;width:600px;text-align:right;">1,845</div>
<div class="a" style="top:595.30px;font-size:11.4px;line-height:20px;color:#333;font-weight:normal;font-family:'Liberation Sans',sans-serif;left:-101.10px;width:600px;text-align:right;">47</div>
<div class="a" style="top:595.30px;font-size:11.4px;line-height:20px;color:#333;font-weight:normal;font-family:'Liberation Sans',sans-serif;left:-27.50px;width:600px;text-align:right;">2,609.38</div>
<div class="a" style="top:595.30px;font-size:11.4px;line-height:20px;color:#333;font-weight:normal;font-family:'Liberation Sans',sans-serif;left:45.90px;width:600px;text-align:right;">66.71</div>
<div class="a" style="top:595.30px;font-size:11.4px;line-height:20px;color:#333;font-weight:normal;font-family:'Liberation Sans',sans-serif;left:119.70px;width:600px;text-align:right;">0.13</div>
<div class="a" style="top:595.30px;font-size:11.4px;line-height:20px;color:#333;font-weight:normal;font-family:'Liberation Sans',sans-serif;left:193.30px;width:600px;text-align:right;">0.00</div>
<div class="a" style="top:595.30px;font-size:11.4px;line-height:20px;color:#333;font-weight:normal;font-family:'Liberation Sans',sans-serif;left:266.90px;width:600px;text-align:right;">2,225</div>
<div class="a" style="top:625.97px;font-size:11.75px;line-height:20px;color:#333;font-weight:normal;font-family:'Liberation Sans',sans-serif;left:112.50px;">Tech Lab</div>
<div class="a" style="top:625.97px;font-size:11.4px;line-height:20px;color:#333;font-weight:normal;font-family:'Liberation Sans',sans-serif;left:-248.30px;width:600px;text-align:right;">2,325</div>
<div class="a" style="top:625.97px;font-size:11.4px;line-height:20px;color:#333;font-weight:normal;font-family:'Liberation Sans',sans-serif;left:-174.50px;width:600px;text-align:right;">1,701</div>
<div class="a" style="top:625.97px;font-size:11.4px;line-height:20px;color:#333;font-weight:normal;font-family:'Liberation Sans',sans-serif;left:-101.10px;width:600px;text-align:right;">44</div>
<div class="a" style="top:625.97px;font-size:11.4px;line-height:20px;color:#333;font-weight:normal;font-family:'Liberation Sans',sans-serif;left:-27.50px;width:600px;text-align:right;">1,504.90</div>
<div class="a" style="top:625.97px;font-size:11.4px;line-height:20px;color:#333;font-weight:normal;font-family:'Liberation Sans',sans-serif;left:45.90px;width:600px;text-align:right;">38.84</div>
<div class="a" style="top:625.97px;font-size:11.4px;line-height:20px;color:#333;font-weight:normal;font-family:'Liberation Sans',sans-serif;left:119.70px;width:600px;text-align:right;">0.10</div>
<div class="a" style="top:625.97px;font-size:11.4px;line-height:20px;color:#333;font-weight:normal;font-family:'Liberation Sans',sans-serif;left:193.30px;width:600px;text-align:right;">0.00</div>
<div class="a" style="top:625.97px;font-size:11.4px;line-height:20px;color:#333;font-weight:normal;font-family:'Liberation Sans',sans-serif;left:266.90px;width:600px;text-align:right;">1,391</div>
<div class="r" style="left:107px;top:651px;width:764px;height:31px;background:#f5f5f5;"></div>
<div class="a" style="top:656.63px;font-size:11.75px;line-height:20px;color:#333;font-weight:normal;font-family:'Liberation Sans',sans-serif;left:112.50px;">TechLab</div>
<div class="a" style="top:656.63px;font-size:11.4px;line-height:20px;color:#333;font-weight:normal;font-family:'Liberation Sans',sans-serif;left:-248.30px;width:600px;text-align:right;">6,809</div>
<div class="a" style="top:656.63px;font-size:11.4px;line-height:20px;color:#333;font-weight:normal;font-family:'Liberation Sans',sans-serif;left:-174.50px;width:600px;text-align:right;">6,094</div>
<div class="a" style="top:656.63px;font-size:11.4px;line-height:20px;color:#333;font-weight:normal;font-family:'Liberation Sans',sans-serif;left:-101.10px;width:600px;text-align:right;">54</div>
<div class="a" style="top:656.63px;font-size:11.4px;line-height:20px;color:#333;font-weight:normal;font-family:'Liberation Sans',sans-serif;left:-27.50px;width:600px;text-align:right;">6,441.63</div>
<div class="a" style="top:656.63px;font-size:11.4px;line-height:20px;color:#333;font-weight:normal;font-family:'Liberation Sans',sans-serif;left:45.90px;width:600px;text-align:right;">56.76</div>
<div class="a" style="top:656.63px;font-size:11.4px;line-height:20px;color:#333;font-weight:normal;font-family:'Liberation Sans',sans-serif;left:119.70px;width:600px;text-align:right;">0.65</div>
<div class="a" style="top:656.63px;font-size:11.4px;line-height:20px;color:#333;font-weight:normal;font-family:'Liberation Sans',sans-serif;left:193.30px;width:600px;text-align:right;">0.01</div>
<div class="a" style="top:656.63px;font-size:11.4px;line-height:20px;color:#333;font-weight:normal;font-family:'Liberation Sans',sans-serif;left:266.90px;width:600px;text-align:right;">3,573</div>
<div class="a" style="top:687.30px;font-size:11.75px;line-height:20px;color:#333;font-weight:normal;font-family:'Liberation Sans',sans-serif;left:112.50px;">Total</div>
<div class="a" style="top:687.30px;font-size:11.4px;line-height:20px;color:#333;font-weight:normal;font-family:'Liberation Sans',sans-serif;left:-248.30px;width:600px;text-align:right;">12,508</div>
<div class="a" style="top:687.30px;font-size:11.4px;line-height:20px;color:#333;font-weight:normal;font-family:'Liberation Sans',sans-serif;left:-174.50px;width:600px;text-align:right;">10,510</div>
<div class="a" style="top:687.30px;font-size:11.4px;line-height:20px;color:#333;font-weight:normal;font-family:'Liberation Sans',sans-serif;left:-101.10px;width:600px;text-align:right;">50</div>
<div class="a" style="top:687.30px;font-size:11.4px;line-height:20px;color:#333;font-weight:normal;font-family:'Liberation Sans',sans-serif;left:-27.50px;width:600px;text-align:right;">11,629.50</div>
<div class="a" style="top:687.30px;font-size:11.4px;line-height:20px;color:#333;font-weight:normal;font-family:'Liberation Sans',sans-serif;left:45.90px;width:600px;text-align:right;">55.79</div>
<div class="a" style="top:687.30px;font-size:11.4px;line-height:20px;color:#333;font-weight:normal;font-family:'Liberation Sans',sans-serif;left:119.70px;width:600px;text-align:right;">1.43</div>
<div class="a" style="top:687.30px;font-size:11.4px;line-height:20px;color:#333;font-weight:normal;font-family:'Liberation Sans',sans-serif;left:193.30px;width:600px;text-align:right;">0.01</div>
<div class="a" style="top:687.30px;font-size:11.4px;line-height:20px;color:#333;font-weight:normal;font-family:'Liberation Sans',sans-serif;left:266.90px;width:600px;text-align:right;">7,778</div>
<div class="r" style="left:107px;top:713px;width:764px;height:26px;background:#f5f5f5;"></div>
<div class="a" style="top:717.97px;font-size:11.75px;line-height:20px;color:#333;font-weight:normal;font-family:'Liberation Sans',sans-serif;left:17.60px;">Chester</div>
<div class="a" style="top:717.97px;font-size:11.75px;line-height:20px;color:#333;font-weight:normal;font-family:'Liberation Sans',sans-serif;left:112.50px;">1st Floor</div>
<div class="a" style="top:717.97px;font-size:11.4px;line-height:20px;color:#333;font-weight:normal;font-family:'Liberation Sans',sans-serif;left:-248.30px;width:600px;text-align:right;">8,712</div>
<div class="a" style="top:717.97px;font-size:11.4px;line-height:20px;color:#333;font-weight:normal;font-family:'Liberation Sans',sans-serif;left:-174.50px;width:600px;text-align:right;">6,290</div>
<div class="a" style="top:717.97px;font-size:11.4px;line-height:20px;color:#333;font-weight:normal;font-family:'Liberation Sans',sans-serif;left:-101.10px;width:600px;text-align:right;">43</div>
<div class="a" style="top:717.97px;font-size:11.4px;line-height:20px;color:#333;font-weight:normal;font-family:'Liberation Sans',sans-serif;left:-27.50px;width:600px;text-align:right;">5,367.73</div>
<div class="a" style="top:717.97px;font-size:11.4px;line-height:20px;color:#333;font-weight:normal;font-family:'Liberation Sans',sans-serif;left:45.90px;width:600px;text-align:right;">36.97</div>
<div class="a" style="top:717.97px;font-size:11.4px;line-height:20px;color:#333;font-weight:normal;font-family:'Liberation Sans',sans-serif;left:119.70px;width:600px;text-align:right;">2.05</div>
<div class="a" style="top:717.97px;font-size:11.4px;line-height:20px;color:#333;font-weight:normal;font-family:'Liberation Sans',sans-serif;left:193.30px;width:600px;text-align:right;">0.01</div>
<div class="a" style="top:717.97px;font-size:11.4px;line-height:20px;color:#333;font-weight:normal;font-family:'Liberation Sans',sans-serif;left:266.90px;width:600px;text-align:right;">6,754</div>
<div class="r" style="left:107px;top:528px;width:764px;height:1px;background:#e3e3e3;"></div>
<div class="r" style="left:107px;top:682px;width:764px;height:1px;background:#e3e3e3;"></div>
<div class="r" style="left:12px;top:559px;width:859px;height:1px;background:#c0c0c0;"></div>
<div class="r" style="left:12px;top:712px;width:859px;height:2px;background:#d4d4d4;"></div>
<div class="r" style="left:12px;top:739px;width:859px;height:1px;background:#d4d4d4;"></div>
<div class="r" style="left:0px;top:767px;width:1100px;height:13px;background:#f0f0f0;"></div>
</body></html>
